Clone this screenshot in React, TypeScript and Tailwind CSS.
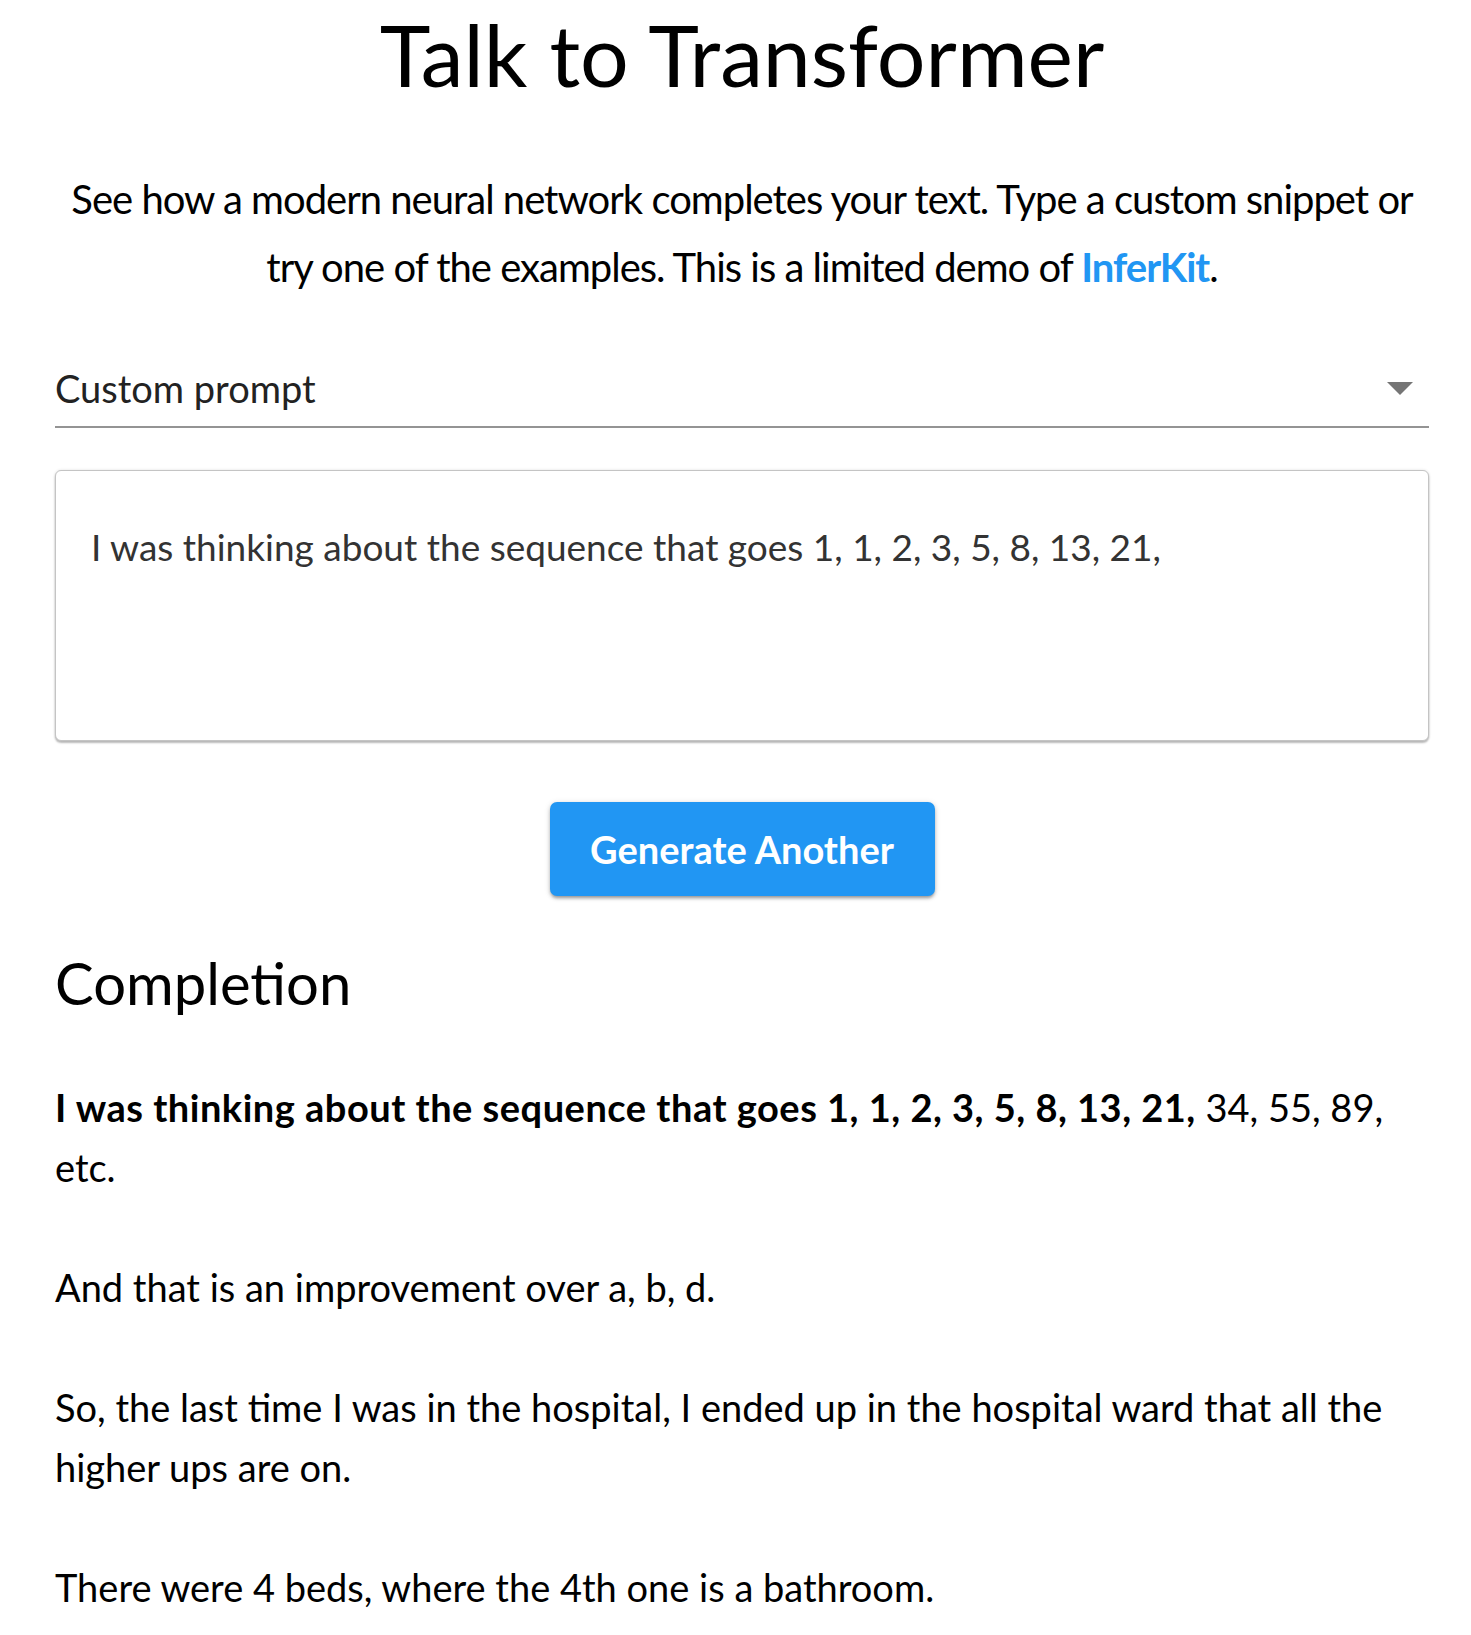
export default function App() {
  return (
    <div className="min-h-screen bg-white text-black font-['Lato',sans-serif]">
      <div className="ml-[55px] w-[1374px]">
        <h1 className="text-center text-[86px] leading-[108px] font-normal">Talk to Transformer</h1>

        <p className="mt-[57px] text-center text-[40px] leading-[68px] tracking-[-1px]">
          See how a modern neural network completes your text. Type a custom snippet or try one of the examples. This is
          a limited demo of <a className="font-bold text-[#2196f3]">InferKit</a>.
        </p>

        <div className="mt-[49px] flex h-[78px] items-center justify-between border-b-2 border-[#949494]">
          <span className="text-[38px] text-[#222]">Custom prompt</span>
          <svg width="26" height="13" viewBox="0 0 26 13" className="mr-[16px]">
            <polygon points="0,0 26,0 13,13" fill="#757575" />
          </svg>
        </div>

        <div className="mt-[42px] h-[271px] rounded-[6px] border border-[#c4c4c4] bg-white px-[35px] pt-[52px] shadow-[0_2px_2px_0_rgba(0,0,0,0.25),0_0_3px_0_rgba(0,0,0,0.12)]">
          <p className="text-[37px] leading-[48px] text-[#333]">
            I was thinking about the sequence that goes 1, 1, 2, 3, 5, 8, 13, 21,
          </p>
        </div>

        <div className="mt-[61px] flex justify-center">
          <button className="h-[94px] w-[385px] rounded-[7px] bg-[#2196f3] text-[38px] font-bold text-white shadow-[0_3px_3px_-1px_rgba(0,0,0,0.25),0_2px_4px_0_rgba(0,0,0,0.14),0_1px_6px_0_rgba(0,0,0,0.12)]">
            Generate Another
          </button>
        </div>

        <h2 className="mt-[47px] text-[58px] leading-[80px] font-normal">Completion</h2>

        <div className="mt-[54px] text-[38px] leading-[60px]">
          <p className="mb-[60px]">
            <b className="font-bold tracking-[0.5px]">I was thinking about the sequence that goes 1, 1, 2, 3, 5, 8, 13, 21,</b>{" "}
            34, 55, 89, etc.
          </p>
          <p className="mb-[60px]">And that is an improvement over a, b, d.</p>
          <p className="mb-[60px]">
            So, the last time I was in the hospital, I ended up in the hospital ward that all the higher ups are on.
          </p>
          <p className="mb-[60px]">There were 4 beds, where the 4th one is a bathroom.</p>
        </div>
      </div>
    </div>
  );
}
